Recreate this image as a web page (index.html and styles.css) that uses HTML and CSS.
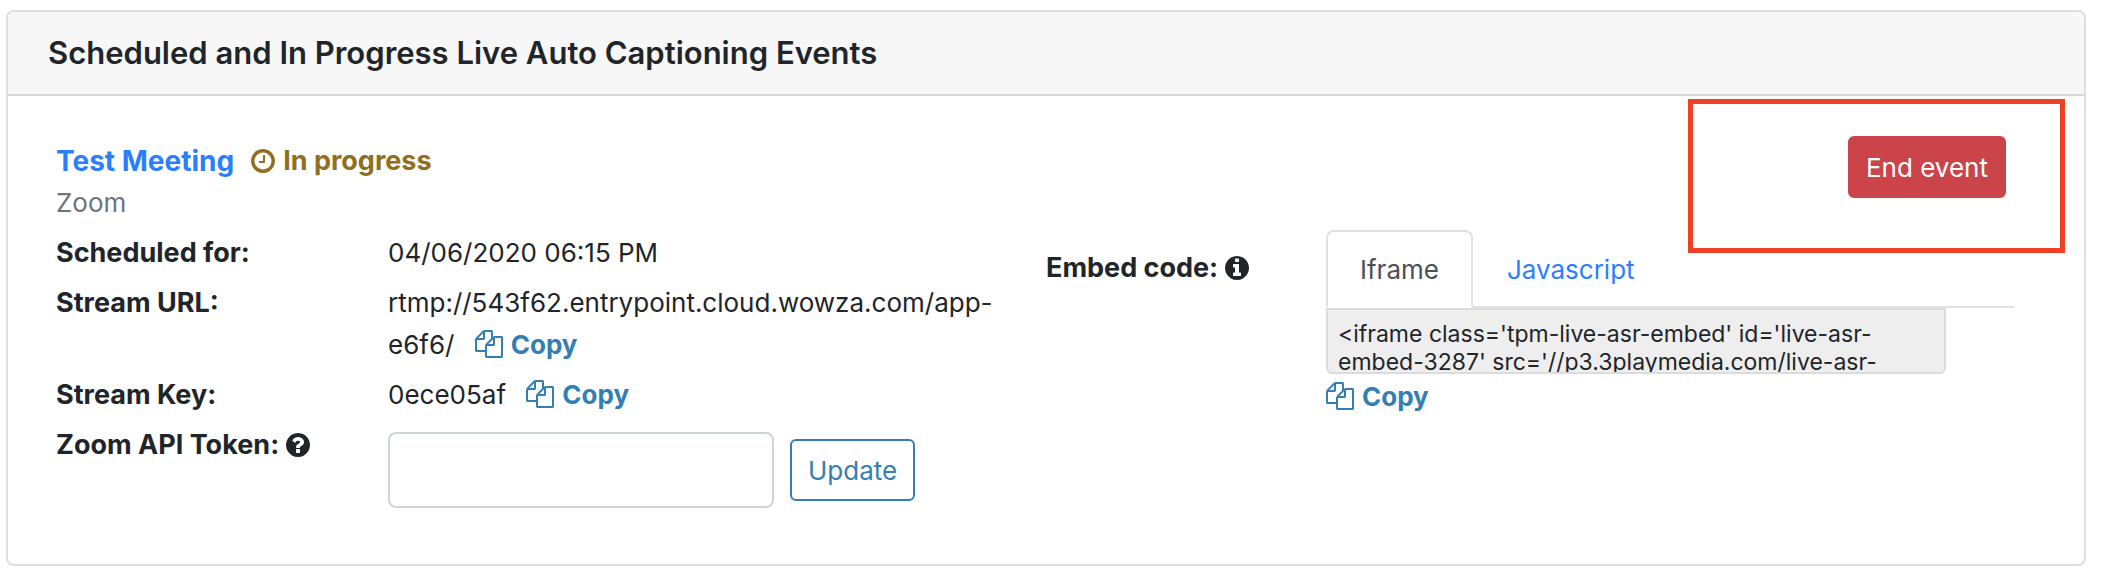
FILE: index.html
```
<!DOCTYPE html>
<html lang="en">
<head>
  <meta charset="UTF-8">
  <meta name="viewport" content="width=device-width, initial-scale=1.0">
  <title>Live Auto Captioning Events</title>
  <link rel="stylesheet" href="styles.css">
</head>
<body>
  <!-- icon set -->
  <svg class="icon-defs" aria-hidden="true">
    <symbol id="icon-clock" viewBox="128 128 1536 1536">
      <path d="M1024 544v448q0 14-9 23t-23 9h-320q-14 0-23-9t-9-23v-64q0-14 9-23t23-9h224v-352q0-14 9-23t23-9h64q14 0 23 9t9 23zm416 352q0-148-73-273t-198-198-273-73-273 73-198 198-73 273 73 273 198 198 273 73 273-73 198-198 73-273zm224 0q0 209-103 385.500t-279.500 279.500-385.500 103-385.500-103-279.500-279.500-103-385.500 103-385.500 279.500-279.500 385.500-103 385.500 103 279.500 279.500 103 385.500z"/>
    </symbol>
    <symbol id="icon-copy" viewBox="0 0 1792 1792">
      <path d="M1696 384q40 0 68 28t28 68v1216q0 40-28 68t-68 28h-960q-40 0-68-28t-28-68v-288h-544q-40 0-68-28t-28-68v-672q0-40 20-88t48-76l408-408q28-28 76-48t88-20h416q40 0 68 28t28 68v328q68-40 128-40h416zm-544 213l-299 299h299v-299zm-640-384l-299 299h299v-299zm196 647l316-316v-416h-384v416q0 40-28 68t-68 28h-416v640h512v-256q0-40 20-88t48-76zm956 804v-1152h-384v416q0 40-28 68t-68 28h-416v640h896z"/>
    </symbol>
    <symbol id="icon-info" viewBox="128 128 1536 1536">
      <path d="M1152 1376v-160q0-14-9-23t-23-9h-96v-512q0-14-9-23t-23-9h-320q-14 0-23 9t-9 23v160q0 14 9 23t23 9h96v320h-96q-14 0-23 9t-9 23v160q0 14 9 23t23 9h448q14 0 23-9t9-23zm-128-896v-160q0-14-9-23t-23-9h-192q-14 0-23 9t-9 23v160q0 14 9 23t23 9h192q14 0 23-9t9-23zm640 416q0 209-103 385.500t-279.500 279.500-385.500 103-385.500-103-279.500-279.500-103-385.500 103-385.500 279.500-279.500 385.500-103 385.500 103 279.500 279.500 103 385.500z"/>
    </symbol>
    <symbol id="icon-question" viewBox="128 128 1536 1536">
      <path d="M1024 1376v-192q0-14-9-23t-23-9h-192q-14 0-23 9t-9 23v192q0 14 9 23t23 9h192q14 0 23-9t9-23zm256-672q0-88-55.500-163t-138.500-116-170-41q-243 0-371 213-15 24 8 42l132 100q7 6 19 6 16 0 25-12 53-68 86-92 34-24 86-24 48 0 85.500 26t37.500 59q0 38-20 61t-68 45q-63 28-115.500 86.500t-52.500 125.500v36q0 14 9 23t23 9h192q14 0 23-9t9-23q0-19 21.500-49.500t54.500-49.500q32-18 49-28.500t46-35 44.500-48 28-60.500 12.500-81zm384 192q0 209-103 385.500t-279.500 279.500-385.500 103-385.500-103-279.500-279.500-103-385.500 103-385.500 279.500-279.500 385.500-103 385.500 103 279.500 279.500 103 385.500z"/>
    </symbol>
  </svg>

  <main class="card">
    <div class="card-header">
      <h1>Scheduled and In Progress Live Auto Captioning Events</h1>
    </div>

    <div class="card-body">
      <div class="event-header">
        <div>
          <div class="event-title">
            <a href="#">Test Meeting</a>
            <span class="status"><svg class="icon"><use href="#icon-clock"/></svg>In progress</span>
          </div>
          <div class="platform">Zoom</div>
        </div>
        <div class="event-actions">
          <button type="button" class="btn btn-danger">End event</button>
          <div class="highlight"></div>
        </div>
      </div>

      <div class="event-details">
        <div class="stream">
          <div class="row">
            <div class="label">Scheduled for:</div>
            <div class="value">04/06/2020 06:15 PM</div>
          </div>
          <div class="row">
            <div class="label">Stream URL:</div>
            <div class="value">rtmp://543f62.entrypoint.cloud.wowza.com/app-e6f6/
              <a href="#" class="copy"><svg class="icon-copy"><use href="#icon-copy"/></svg>Copy</a>
            </div>
          </div>
          <div class="row">
            <div class="label">Stream Key:</div>
            <div class="value">0ece05af
              <a href="#" class="copy"><svg class="icon-copy"><use href="#icon-copy"/></svg>Copy</a>
            </div>
          </div>
          <div class="row">
            <label class="label" for="token">Zoom API Token: <svg class="icon"><use href="#icon-question"/></svg></label>
            <div class="value token-form">
              <input type="text" id="token">
              <button type="button" class="btn btn-outline">Update</button>
            </div>
          </div>
        </div>

        <div class="embed">
          <label class="label" for="embedCode">Embed code: <svg class="icon"><use href="#icon-info"/></svg></label>
          <div class="embed-content">
            <nav class="tabs">
              <a href="#" class="tab active">Iframe</a>
              <a href="#" class="tab">Javascript</a>
            </nav>
            <textarea id="embedCode" readonly>&lt;iframe class='tpm-live-asr-embed' id='live-asr-embed-3287' src='//p3.3playmedia.com/live-asr-</textarea>
            <a href="#" class="copy"><svg class="icon-copy"><use href="#icon-copy"/></svg>Copy</a>
          </div>
        </div>
      </div>
    </div>
  </main>
</body>
</html>
```
FILE: styles.css
```
* {
  box-sizing: border-box;
}

body {
  margin: 0;
  padding: 10px 28px 18px 6px;
  font-family: Inter, "Liberation Sans", sans-serif;
  font-size: 26px;
  line-height: 42px;
  color: #212529;
  background: #fff;
}

a {
  color: #2a7fff;
  text-decoration: none;
}

.icon-defs {
  display: none;
}

.icon {
  width: 24px;
  height: 24px;
  fill: currentColor;
  vertical-align: -3px;
}

.icon-copy {
  width: 28px;
  height: 28px;
  margin-right: 8px;
  fill: currentColor;
  vertical-align: -4px;
}

.card {
  border: 2px solid #dfdfdf;
  border-radius: 8px;
}

.card-header {
  padding: 20px 40px;
  background: #f7f7f7;
  border-bottom: 2px solid #d8d8d8;
  border-radius: 6px 6px 0 0;
}

.card-header h1 {
  margin: 0;
  font-size: 31px;
  font-weight: 600;
}

.card-body {
  padding: 40px 70px 56px 48px;
}

.event-header {
  display: flex;
  justify-content: space-between;
  padding-right: 8px;
  margin-bottom: 6px;
}

.event-title {
  display: flex;
  gap: 17px;
  padding-top: 4px;
  font-size: 27px;
  font-weight: 700;
}

.event-title > a {
  font-size: 28px;
}

.status {
  color: #926f20;
}

.status .icon {
  margin-right: 8px;
}

.platform {
  color: #6c757d;
}

/* red frame around the end button */
.event-actions {
  position: relative;
  align-self: flex-start;
}

.highlight {
  position: absolute;
  inset: -37px -59px -55px -160px;
  border: 5px solid #ed4024;
  pointer-events: none;
}

.btn {
  display: block;
  height: 62px;
  padding: 2px 16px 0;
  font: inherit;
  border: 2px solid;
  border-radius: 6px;
  cursor: pointer;
}

.btn-danger {
  color: #fff;
  background: #cb444a;
  border-color: #cb444a;
}

.btn-outline {
  color: #337eb3;
  background: #fff;
  border-color: #337eb3;
}

.event-details {
  display: grid;
  grid-template-columns: 1fr 1fr;
  gap: 22px;
}

.stream {
  padding-top: 2px;
}

.row {
  display: grid;
  grid-template-columns: 332px 1fr;
  margin-bottom: 8px;
}

.row:last-child {
  margin-bottom: 0;
}

.label {
  font-size: 27px;
  font-weight: 700;
}

.copy {
  color: #337eb3;
  font-weight: 700;
}

.value .copy {
  margin-left: 13px;
}

.token-form {
  display: flex;
  align-items: center;
  gap: 16px;
  padding-top: 8px;
}

.token-form input {
  width: 386px;
  height: 76px;
  padding: 0 24px;
  font: inherit;
  border: 2px solid #ced4da;
  border-radius: 8px;
}

.embed {
  display: grid;
  grid-template-columns: 280px 1fr;
}

.embed > .label {
  padding-top: 17px;
}

.tabs {
  display: flex;
  border-bottom: 2px solid #dee2e6;
}

.tab {
  margin-bottom: -2px;
  padding: 17px 32px 15px;
  border: 2px solid transparent;
  border-radius: 8px 8px 0 0;
}

.tab.active {
  color: #495057;
  background: #fff;
  border-color: #dee2e6 #dee2e6 #fff;
}

.embed textarea {
  display: block;
  width: 620px;
  max-width: 100%;
  height: 66px;
  margin-bottom: 2px;
  padding: 10px;
  font-family: inherit;
  font-size: 23px;
  line-height: 28px;
  color: #212529;
  background: #eee;
  border: 2px solid #dcdcdc;
  border-radius: 0 0 6px 6px;
  resize: none;
  overflow: hidden;
}
```
